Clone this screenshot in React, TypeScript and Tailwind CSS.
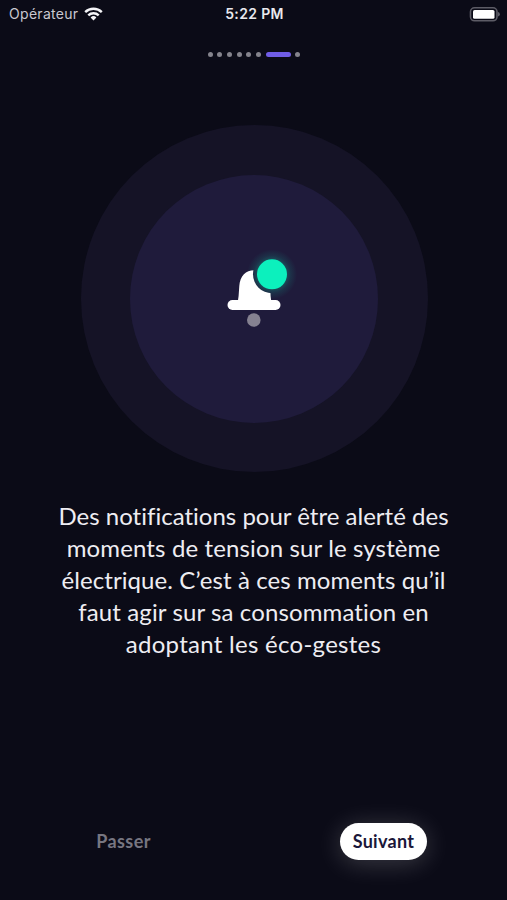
const TOTAL_STEPS = 8;
const CURRENT_STEP = 6;

const MESSAGE_LINES = [
  { text: "Des notifications pour être alerté des", tracking: "tracking-[0.01px]" },
  { text: "moments de tension sur le système", tracking: "tracking-[0.13px]" },
  { text: "électrique. C’est à ces moments qu’il", tracking: "tracking-[0.08px]" },
  { text: "faut agir sur sa consommation en", tracking: "tracking-[0.12px]" },
  { text: "adoptant les éco-gestes", tracking: "tracking-[0.28px]" },
];

function StatusBar() {
  return (
    <header className="grid h-7 grid-cols-3 items-center pl-[9px] pr-[7px] font-['Inter',sans-serif] text-[#e9e9ee]">
      <div className="flex items-center gap-1.5">
        <span className="text-[14px] leading-5 tracking-[0.3px] text-[#c9c8d0]">Opérateur</span>
        <svg width="19" height="14" viewBox="0 0 19 14" fill="none" stroke="#f4f4f7" strokeWidth="2.4">
          <path d="M1.2 5.2a11.8 11.8 0 0 1 16.6 0" />
          <path d="M4.3 8.4a7.4 7.4 0 0 1 10.4 0" />
          <path d="M9.5 13.4 6.6 10.5a4.1 4.1 0 0 1 5.8 0Z" fill="#f4f4f7" stroke="none" />
        </svg>
      </div>
      <span className="text-center text-[14px] font-semibold leading-5 tracking-[0.35px]">5:22 PM</span>
      <svg className="justify-self-end" width="31" height="15" viewBox="0 0 31 15">
        <rect x="1.5" y="0.8" width="26.5" height="13" rx="4" fill="none" stroke="#5d5c66" strokeWidth="1.6" />
        <rect x="4" y="3" width="21.5" height="8.8" rx="1.6" fill="#fff" />
        <path d="M29 5v4.6q1.9-.6 1.9-2.3T29 5Z" fill="#5d5c66" />
      </svg>
    </header>
  );
}

function StepIndicator() {
  return (
    <div className="mt-6 flex h-[5px] items-center justify-center gap-[4.7px] pl-px">
      {Array.from({ length: TOTAL_STEPS }, (_, i) => (
        <span
          key={i}
          className={
            i === CURRENT_STEP
              ? "h-[5px] w-[25px] rounded-full bg-[#705de6]"
              : "size-[5px] rounded-full bg-[#85848d]"
          }
        />
      ))}
    </div>
  );
}

function BellIllustration() {
  return (
    <div className="mt-[68px] flex justify-center pl-px">
      <div className="flex size-[347px] items-center justify-center rounded-full bg-[#151326]">
        <div className="flex size-[248px] items-center justify-center rounded-full bg-[#1f1b3b]">
          <svg width="90" height="90" viewBox="-1 9 90 90" overflow="visible">
            <defs>
              <radialGradient id="glow">
                <stop offset="0.5" stopColor="#0cf0bd" stopOpacity="0.3" />
                <stop offset="0.75" stopColor="#0cf0bd" stopOpacity="0.1" />
                <stop offset="1" stopColor="#0cf0bd" stopOpacity="0" />
              </radialGradient>
              <mask id="badge-cut">
                <rect width="90" height="90" fill="#fff" />
                <circle cx="62" cy="29.3" r="19" fill="#000" />
              </mask>
            </defs>
            <circle cx="62" cy="29.3" r="25" fill="url(#glow)" />
            <path
              d="M27 57Q28.4 55 28.6 51L29.3 41C30 31 36 25.3 44 25.3 53 25.3 59.6 31 60.2 41L60.6 51Q60.8 55 62 57Z"
              fill="#fff"
              mask="url(#badge-cut)"
            />
            <rect x="17.5" y="55" width="53" height="10" rx="5" fill="#fff" />
            <circle cx="43.8" cy="75" r="6.8" fill="#858291" />
            <circle cx="62" cy="29.3" r="15" fill="#0cf0bd" />
          </svg>
        </div>
      </div>
    </div>
  );
}

export default function App() {
  return (
    <main className="flex h-[900px] w-[507px] flex-col overflow-hidden bg-[#0b0b17] font-['Lato',sans-serif]">
      <StatusBar />
      <StepIndicator />
      <BellIllustration />

      <p className="mt-7 text-center text-[24px] leading-[32.1px] text-[#eeedf2]">
        {MESSAGE_LINES.map((line) => (
          <span key={line.text} className={`block whitespace-nowrap ${line.tracking}`}>
            {line.text}
          </span>
        ))}
      </p>

      {/* Actions */}
      <div className="mb-10 mt-auto flex items-center justify-between px-20">
        <button type="button" className="h-[37px] w-[87px] text-[18px] font-bold tracking-[0.4px] text-[#777681]">
          Passer
        </button>
        <button
          type="button"
          className="h-[37px] w-[87px] rounded-full bg-white text-[18px] font-bold tracking-[0.3px] text-[#1b1739] shadow-[0_3px_26px_rgba(255,255,255,0.2)]"
        >
          Suivant
        </button>
      </div>
    </main>
  );
}
